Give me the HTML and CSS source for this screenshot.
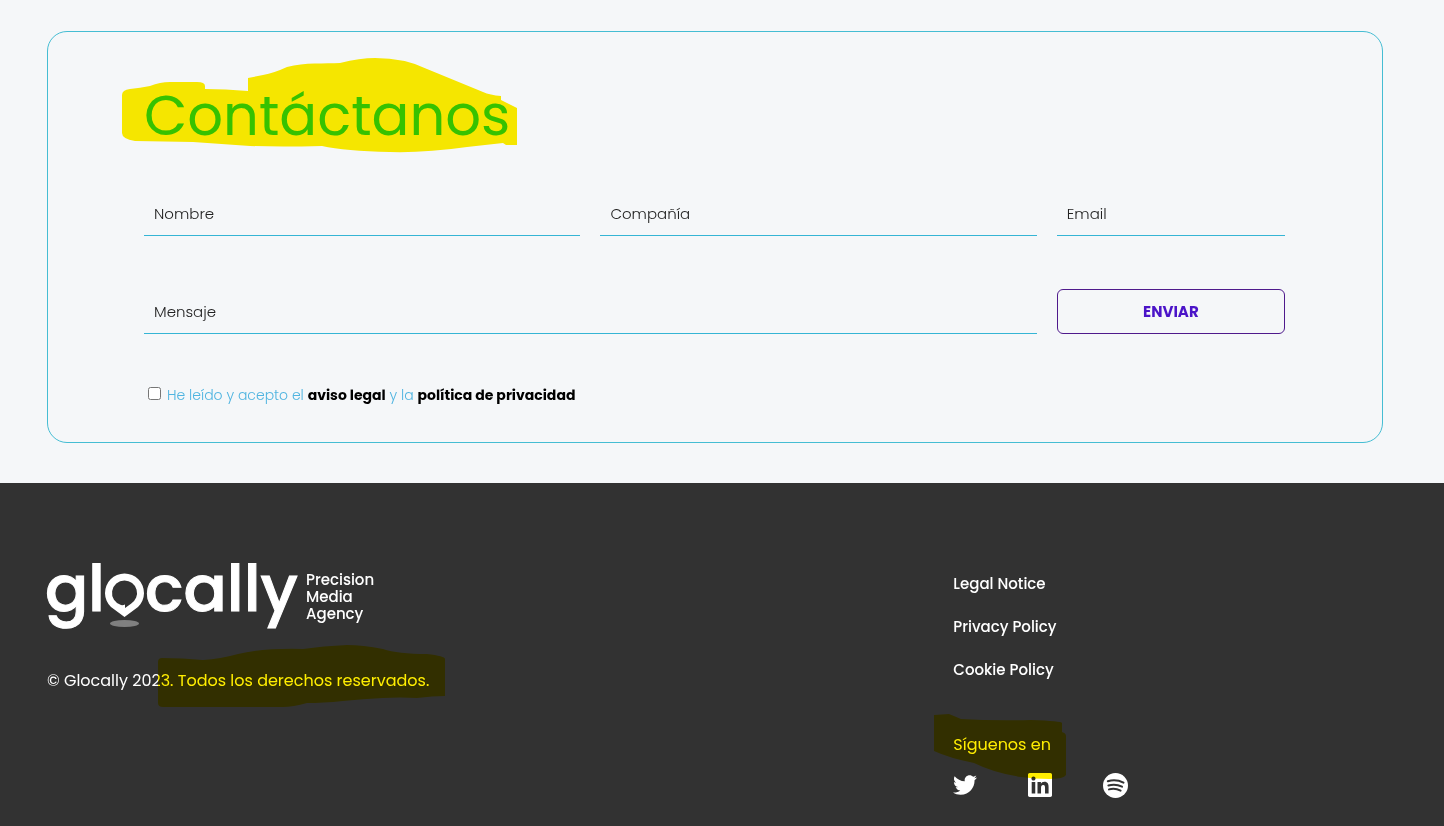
FILE: index.html
```html
<!DOCTYPE html>
<html lang="es">
<head>
<meta charset="utf-8">
<meta name="viewport" content="width=device-width, initial-scale=1">
<title>Glocally – Contáctanos</title>
<link rel="stylesheet" href="styles.css">
</head>
<body>
<main class="contact">
  <section class="card">
    <h1 class="title marked">Contáctanos
      <svg class="marker marker-title" width="400" height="100" viewBox="0 0 400 100" aria-hidden="true"><path d="M2 40Q2 35 10 34Q20 33 30 31Q40 27 50 27H77Q85 27 85 31V34Q105 34 128 36V23L143 20Q154 18 167 12C185 7 205 9 220 8Q240 3 255 3Q285 3 307 14L363 37Q370 40 381 41V45L397 53V90H386L383 88L347 92Q305 98 270 97Q225 96 202 91Q160 92 130 91L73 87L15 86Q2 84 2 78Z"/></svg>
    </h1>
    <form class="form">
      <div class="fields">
        <input class="field" type="text" placeholder="Nombre" aria-label="Nombre">
        <input class="field" type="text" placeholder="Compañía" aria-label="Compañía">
        <input class="field" type="email" placeholder="Email" aria-label="Email">
        <input class="field field-wide" type="text" placeholder="Mensaje" aria-label="Mensaje">
        <button class="send" type="submit">ENVIAR</button>
      </div>
      <div class="consent">
        <input class="consent-box" type="checkbox" id="consent">
        <label for="consent">He leído y acepto el <a href="#aviso">aviso legal</a> y la <a href="#privacidad">política de privacidad</a></label>
      </div>
    </form>
  </section>
</main>
<footer class="footer">
  <div class="brand">
    <svg class="logo" width="332" height="70" viewBox="0 0 332 70" role="img" aria-label="glocally Precision Media Agency">
      <g class="wordmark">
        <text x="-2" y="51">g</text>
        <text x="41" y="51">l</text>
        <text x="98" y="51">cally</text>
      </g>
      <path class="pin" fill-rule="evenodd" d="M64 47A19.500 19.500 0 1 1 91 47L77.500 57zM77.500 20.500A12.500 12.500 0 0 1 84 43.700L78 48V44.500Q76 45.500 74 45A12.500 12.500 0 0 1 77.500 20.500z"/>
      <ellipse class="pin-shadow" cx="77.500" cy="63.500" rx="14.500" ry="3.500"/>
      <g class="tagline">
        <text x="259" y="25">Precision</text>
        <text x="259" y="42">Media</text>
        <text x="259" y="59">Agency</text>
      </g>
    </svg>
    <p class="copyright marked">© Glocally 2023. Todos los derechos reservados.
      <svg class="marker marker-copy" width="288" height="64" viewBox="0 0 288 64" aria-hidden="true"><path d="M0 18Q0 14 4 14Q25 14 45 16Q62 15 80 10Q105 4 145 5Q165 2 189 1Q205 1 225 5Q240 10 269 10Q287 12 287 15V52Q275 52 259 54Q242 53 225 54Q205 55 185 57Q165 59 149 59Q135 63 125 63H5Q0 63 0 59Z"/></svg>
    </p>
  </div>
  <div class="links">
    <nav class="legal">
      <a href="#legal">Legal Notice</a>
      <a href="#privacy">Privacy Policy</a>
      <a href="#cookies">Cookie Policy</a>
    </nav>
    <h2 class="follow marked">Síguenos en
      <svg class="marker marker-follow" width="134" height="66" viewBox="0 0 134 66" aria-hidden="true"><path d="M0 2L15 1Q20 3 27 6Q60 8 97 7Q128 8 128 10V19Q132 20 132 23V62Q130 66 115 66Q100 66 87 64Q60 60 40 50Q15 45 0 38Z"/></svg>
    </h2>
    <div class="social">
      <a href="#twitter" aria-label="Twitter"><svg width="24" height="24" viewBox="0 0 24 24"><path d="M23.954 4.569c-.885.389-1.830.654-2.825.775 1.014-.611 1.794-1.574 2.163-2.723-.951.555-2.005.959-3.127 1.184-.896-.959-2.173-1.559-3.591-1.559-2.717 0-4.920 2.203-4.920 4.917 0 .39.045.765.127 1.124C7.691 8.094 4.066 6.130 1.640 3.161c-.427.722-.666 1.561-.666 2.475 0 1.710.87 3.213 2.188 4.096-.807-.026-1.566-.248-2.228-.616v.061c0 2.385 1.693 4.374 3.946 4.827-.413.111-.849.171-1.296.171-.314 0-.615-.03-.916-.086.631 1.953 2.445 3.377 4.604 3.417-1.680 1.319-3.809 2.105-6.102 2.105-.39 0-.779-.023-1.170-.067 2.189 1.394 4.768 2.209 7.557 2.209 9.054 0 13.999-7.496 13.999-13.986 0-.209 0-.42-.015-.63.961-.689 1.800-1.560 2.460-2.548z"/></svg></a>
      <a href="#linkedin" aria-label="LinkedIn"><svg width="24" height="24" viewBox="0 32 448 448"><path d="M416 32H31.900C14.300 32 0 46.500 0 64.300v383.400C0 465.500 14.300 480 31.900 480H416c17.600 0 32-14.500 32-32.300V64.300c0-17.800-14.400-32.300-32-32.300zM135.400 416H69V202.200h66.500V416zm-33.200-243c-21.300 0-38.500-17.300-38.500-38.500S80.900 96 102.200 96c21.200 0 38.500 17.300 38.500 38.500 0 21.300-17.200 38.500-38.500 38.500zm282.100 243h-66.400V312c0-24.800-.5-56.700-34.500-56.700-34.600 0-39.900 27-39.900 54.900V416h-66.400V202.200h63.700v29.200h.9c8.900-16.800 30.600-34.500 62.900-34.500 67.200 0 79.700 44.300 79.700 101.900V416z"/></svg></a>
      <a href="#spotify" aria-label="Spotify"><svg width="25" height="25" viewBox="0 0 25 25"><circle cx="12.500" cy="12.500" r="12.500"/><path class="waves" d="M4.800 8.200Q13 5.800 20.500 9.600M5.400 12.500Q12.500 10.400 19 13.700M6 16.400Q12 14.800 17.600 17.600"/></svg></a>
    </div>
  </div>
</footer>
</body>
</html>
```
FILE: styles.css
```css
* {
  box-sizing: border-box;
}

body {
  margin: 0;
  background: #323232;
  color: #333;
  font-family: Poppins, Inter, "Open Sans", sans-serif;
  font-size: 16px;
  line-height: 24px;
}

.contact {
  padding: 31px 61px 40px 47px;
  background: #f5f7f9;
}

.card {
  padding: 42px 97px 37px 96px;
  border: 1px solid #45bdd3;
  border-radius: 20px;
}

.marked {
  position: relative;
  width: fit-content;
}

.marker {
  position: absolute;
  fill: #ffee00;
  mix-blend-mode: multiply;
  pointer-events: none;
}

.marker-title {
  left: -24px;
  top: -19px;
}

.marker-copy {
  left: 111px;
  top: -25px;
}

.marker-follow {
  left: -19px;
  top: -20px;
}

.title {
  margin: 0 0 33px;
  color: #36d0dc;
  font-size: 56px;
  font-weight: 400;
  line-height: 84px;
}

.fields {
  display: grid;
  grid-template-columns: calc(40% - 20px) calc(40% - 20px) 20%;
  gap: 53px 20px;
}

.field {
  width: 100%;
  height: 45px;
  padding: 0 10px;
  border: 0;
  border-bottom: 1px solid #35b5d5;
  border-radius: 0;
  background: transparent;
  color: #333;
  font: inherit;
  font-size: 15px;
  font-weight: 300;
}

.field::placeholder {
  color: #222;
  opacity: 1;
}

.field-wide {
  grid-column: span 2;
}

.send {
  height: 45px;
  border: 1px solid #4f1a8c;
  border-radius: 6px;
  background: transparent;
  color: #4b14c8;
  font: inherit;
  font-size: 15px;
  font-weight: 700;
}

.consent {
  display: flex;
  align-items: flex-start;
  gap: 6px;
  margin-top: 51px;
  padding-left: 4px;
  color: #4fb4e0;
  font-size: 14px;
  font-weight: 300;
  line-height: 20px;
}

.consent-box {
  width: 13px;
  height: 13px;
  margin: 2px 0 0;
}

.consent a {
  color: #000;
  font-weight: 700;
  text-decoration: none;
}

.footer {
  display: grid;
  grid-template-columns: 2fr 1fr;
  column-gap: 47px;
  padding: 77px 61px 29px 47px;
  background: #323232;
  color: #fff;
  font-weight: 400;
}

.logo {
  display: block;
  overflow: visible;
  fill: #fff;
}

.wordmark {
  font-size: 64px;
  font-weight: 500;
  stroke: #fff;
  stroke-width: 1px;
}

.tagline {
  font-size: 15px;
  font-weight: 500;
}

.pin-shadow {
  fill: #808080;
}

.copyright {
  margin: 39px 0 0;
}

.links {
  padding-top: 12px;
}

.legal {
  display: grid;
  justify-items: start;
  gap: 19px;
}

.legal a {
  color: #fff;
  font-size: 15px;
  font-weight: 500;
  text-decoration: none;
}

.follow {
  margin: 51px 0 16px;
  font-size: 16px;
  font-weight: 400;
}

.social {
  display: flex;
  gap: 51px;
}

.social svg {
  display: block;
  fill: #fff;
}

.social .waves {
  fill: none;
  stroke: #323232;
  stroke-width: 2;
  stroke-linecap: round;
}
```
